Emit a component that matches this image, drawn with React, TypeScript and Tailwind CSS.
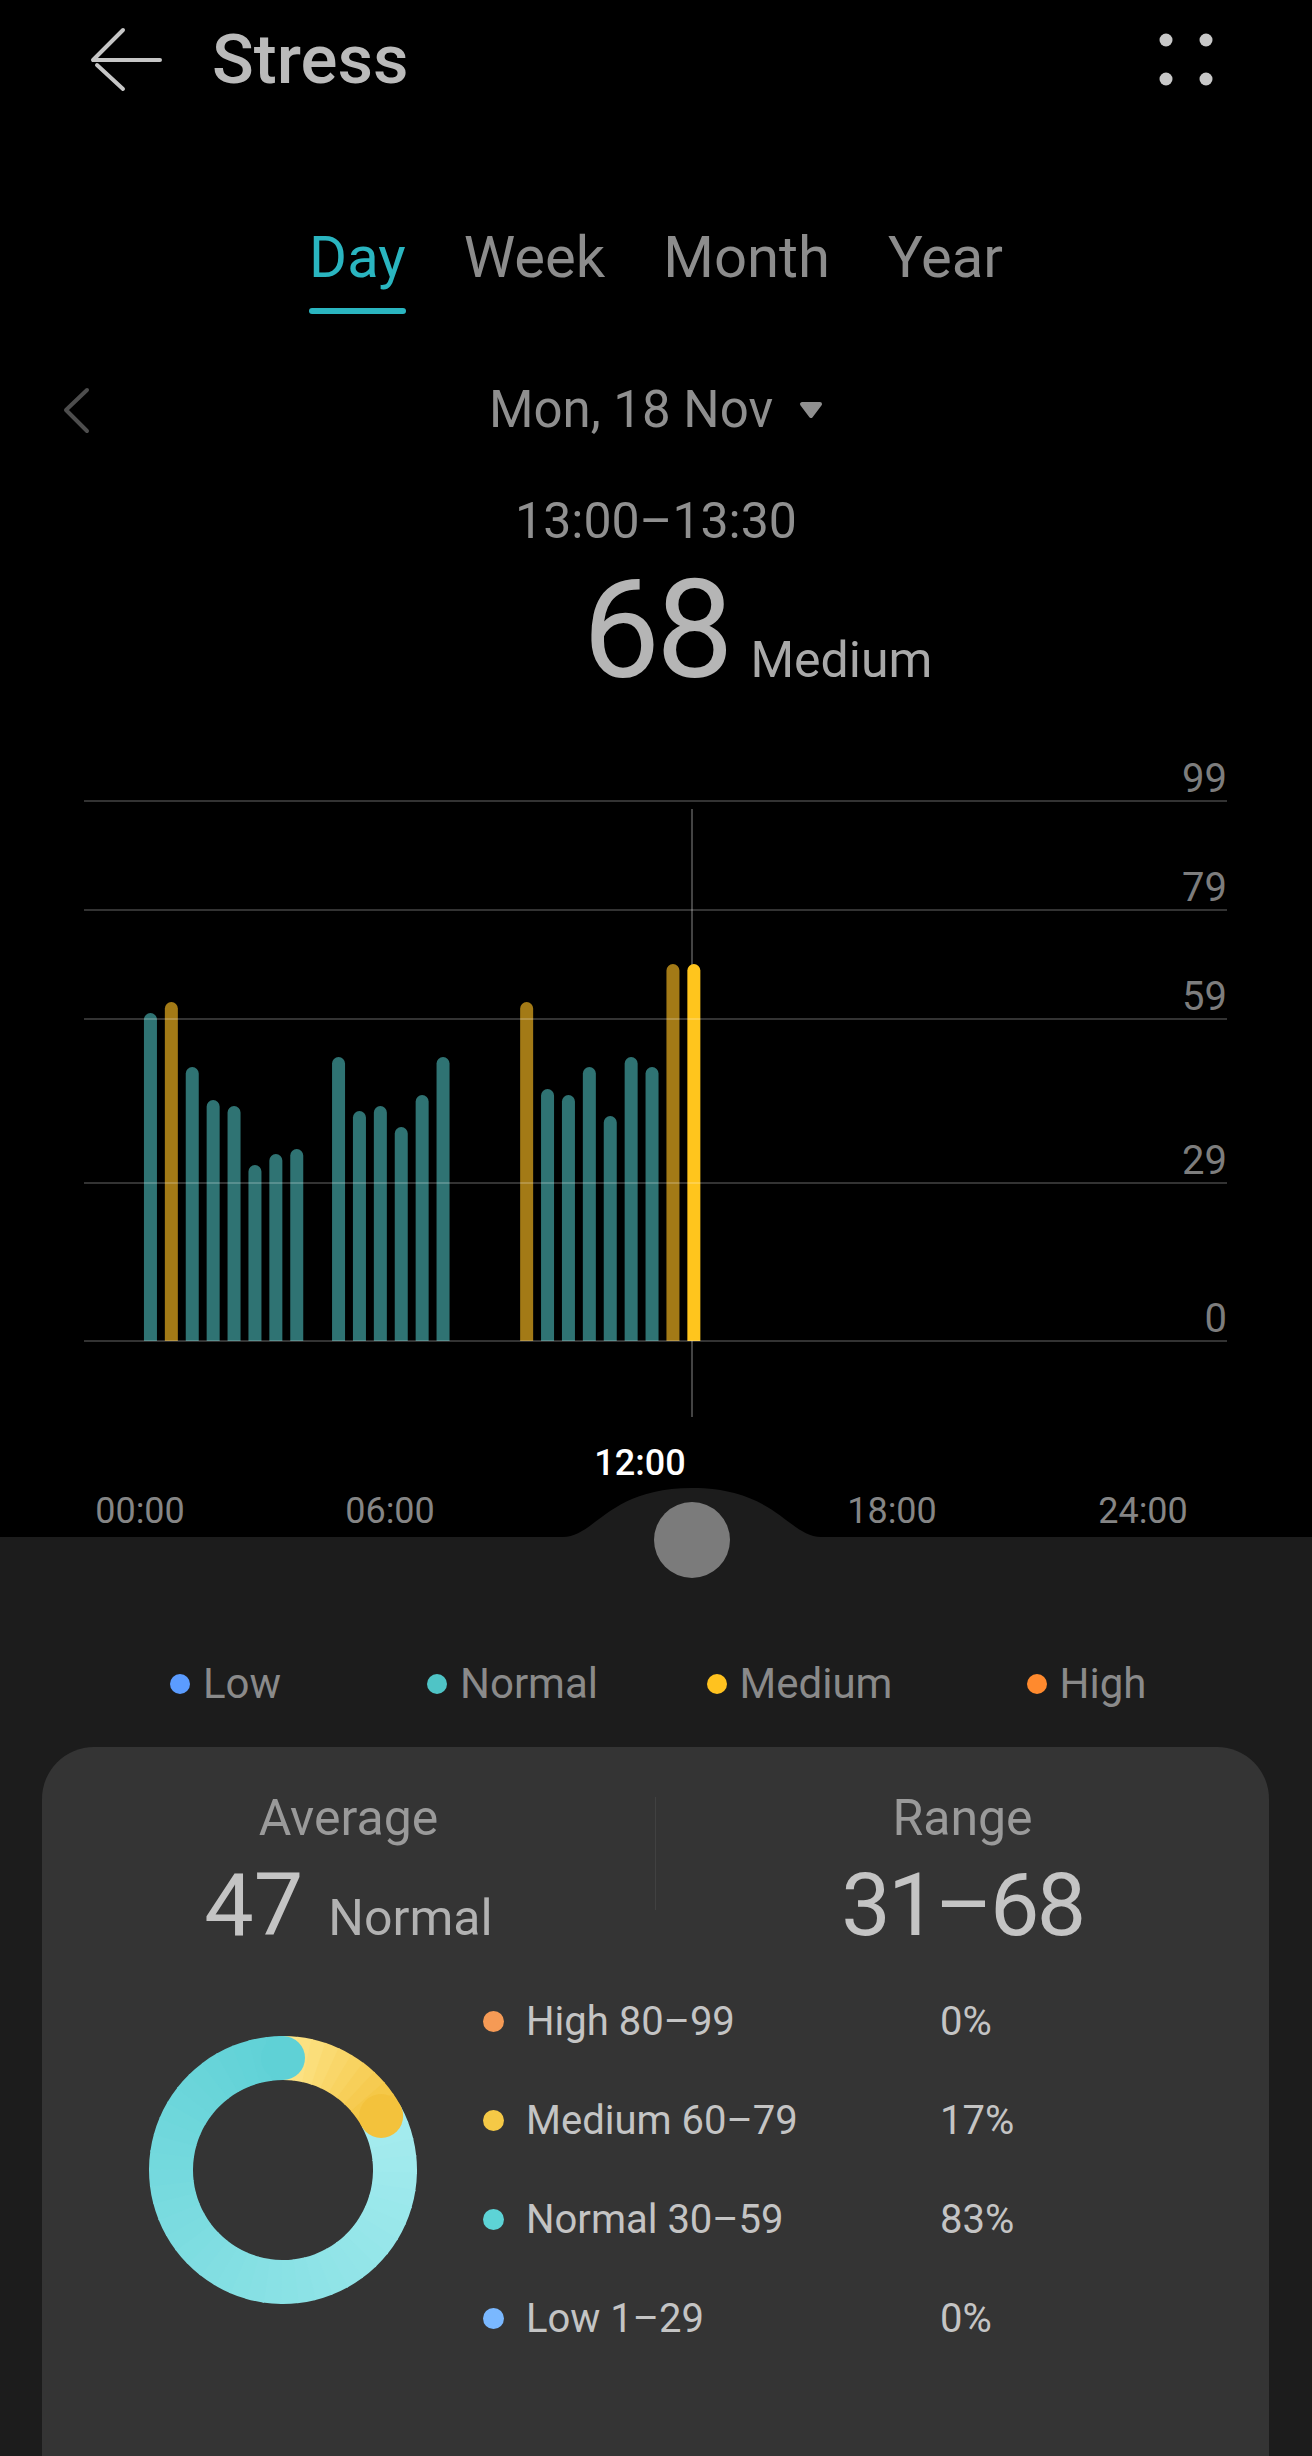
import React from "react";

type Kind = "t" | "g" | "y";
const BARS: [number, number, Kind][] = [
  [0, 1013, "t"],
  [1, 1002, "g"],
  [2, 1067, "t"],
  [3, 1100, "t"],
  [4, 1106, "t"],
  [5, 1165, "t"],
  [6, 1154, "t"],
  [7, 1149, "t"],
  [9, 1057, "t"],
  [10, 1111, "t"],
  [11, 1106, "t"],
  [12, 1127, "t"],
  [13, 1095, "t"],
  [14, 1057, "t"],
  [18, 1002, "g"],
  [19, 1089, "t"],
  [20, 1095, "t"],
  [21, 1067, "t"],
  [22, 1116, "t"],
  [23, 1057, "t"],
  [24, 1067, "t"],
  [25, 964, "g"],
  [26, 964, "y"],
];

const BAR_COLOR: Record<Kind, string> = {
  t: "#2f7373",
  g: "#a37a16",
  y: "#ffc51d",
};

const GRID: [number, string][] = [
  [801, "99"],
  [910, "79"],
  [1019, "59"],
  [1183, "29"],
  [1341, "0"],
];

function barPath(i: number, top: number) {
  const x = 140 + 20.9 * (i + 0.5);
  const r = 6.5;
  return `M${x - r} 1341 V${top + r} A${r} ${r} 0 0 1 ${x + r} ${top + r} V1341 Z`;
}

function hex(c: string): number[] {
  return [1, 3, 5].map((k) => parseInt(c.slice(k, k + 2), 16));
}
function mix(a: string, b: string, t: number) {
  const A = hex(a);
  const B = hex(b);
  const m = A.map((v, k) => Math.round(v + (B[k] - v) * t));
  return `rgb(${m[0]},${m[1]},${m[2]})`;
}

const C = 134;
const R = 112;
function polar(deg: number, r = R): [number, number] {
  const a = (deg * Math.PI) / 180;
  return [C + r * Math.sin(a), C - r * Math.cos(a)];
}
function arc(a0: number, a1: number) {
  const [x0, y0] = polar(a0);
  const [x1, y1] = polar(a1);
  const large = a1 - a0 > 180 ? 1 : 0;
  return `M${x0} ${y0} A${R} ${R} 0 ${large} 1 ${x1} ${y1}`;
}

function segments(from: number, to: number, n: number, c0: string, c1: string) {
  const out: { d: string; color: string }[] = [];
  const step = (to - from) / n;
  for (let k = 0; k < n; k++) {
    const a0 = from + step * k;
    const a1 = k === n - 1 ? to : a0 + step + 0.6;
    out.push({ d: arc(a0, a1), color: mix(c0, c1, (k + 0.5) / n) });
  }
  return out;
}

const MED_END = 61.2;
const TEAL_SEGS = segments(MED_END, 360, 40, "#a6ecef", "#5fd1d6");
const YEL_SEGS = segments(0, MED_END, 10, "#fde78e", "#f3c23c");

function Donut() {
  const [cx, cy] = polar(MED_END);
  return (
    <svg width="268" height="268" viewBox="0 0 268 268">
      {TEAL_SEGS.map((s, k) => (
        <path key={"t" + k} d={s.d} stroke={s.color} strokeWidth="44" fill="none" />
      ))}
      {YEL_SEGS.map((s, k) => (
        <path key={"y" + k} d={s.d} stroke={s.color} strokeWidth="44" fill="none" />
      ))}
      <circle cx={C} cy={C - R} r="22" fill="#5fd1d6" />
      <circle cx={cx} cy={cy} r="22" fill="#f3c23c" />
    </svg>
  );
}

function Chart() {
  return (
    <svg width="1312" height="837" viewBox="0 700 1312 837" className="block">
      <line x1="692" y1="809" x2="692" y2="1417" stroke="#5a5a5a" strokeWidth="1.5" />
      {BARS.map(([i, top, k]) => (
        <path key={i} d={barPath(i, top)} fill={BAR_COLOR[k]} />
      ))}
      {GRID.map(([y, label]) => (
        <g key={label}>
          <line x1="84" y1={y} x2="1227" y2={y} stroke="rgba(255,255,255,0.2)" strokeWidth="2" />
          <text
            x="1227"
            y={y - 9}
            textAnchor="end"
            fill="#7d7d7d"
            fontSize="40"
            fontFamily="Roboto, sans-serif"
          >
            {label}
          </text>
        </g>
      ))}
      {[
        [140, "00:00"],
        [390, "06:00"],
        [892, "18:00"],
        [1143, "24:00"],
      ].map(([x, t]) => (
        <text
          key={t as string}
          x={x as number}
          y="1523"
          textAnchor="middle"
          fill="#858585"
          fontSize="36"
          fontFamily="Roboto, sans-serif"
        >
          {t}
        </text>
      ))}
      <text
        x="640"
        y="1475"
        textAnchor="middle"
        fill="#ffffff"
        fontSize="36"
        fontWeight="500"
        fontFamily="Roboto, sans-serif"
      >
        12:00
      </text>
      <path
        d="M558 1538 L563 1537 C595 1537 608 1488 692 1488 C776 1488 789 1537 821 1537 L826 1538 Z"
        fill="#1c1c1c"
      />
    </svg>
  );
}

const LEGEND = [
  { label: "Low", color: "bg-[#5b9cff]" },
  { label: "Normal", color: "bg-[#4fc4c6]" },
  { label: "Medium", color: "bg-[#ffc21f]" },
  { label: "High", color: "bg-[#ff8a2e]" },
];

const LIST = [
  { label: "High 80–99", pct: "0%", color: "bg-[#f59a55]" },
  { label: "Medium 60–79", pct: "17%", color: "bg-[#f5c946]" },
  { label: "Normal 30–59", pct: "83%", color: "bg-[#5dd3d6]" },
  { label: "Low 1–29", pct: "0%", color: "bg-[#7ab8ff]" },
];

export default function App() {
  return (
    <div className="relative w-[1312px] h-[2456px] overflow-hidden bg-black font-[family-name:Roboto,sans-serif]">
      {/* Header */}
      <div className="flex items-center h-[120px] pl-[88px]">
        <svg width="76" height="68" viewBox="88 26 76 68">
          <path
            d="M123 30 L93 60 L160 60 M97 65 L123 89"
            stroke="#c6c6c6"
            strokeWidth="4"
            fill="none"
            strokeLinecap="round"
            strokeLinejoin="round"
          />
        </svg>
        <div className="ml-[48px] text-[69px] leading-[80px] font-medium text-[#bababa]">Stress</div>
        <svg className="ml-auto mr-[96px]" width="60" height="60" viewBox="1156 29 60 60">
          <circle cx="1166" cy="39" r="6.5" fill="#c8c8c8" />
          <circle cx="1206" cy="39" r="6.5" fill="#c8c8c8" />
          <circle cx="1166" cy="78" r="6.5" fill="#c8c8c8" />
          <circle cx="1206" cy="78" r="6.5" fill="#c8c8c8" />
        </svg>
      </div>

      {/* Tabs */}
      <div className="mt-[108px] flex justify-center items-start gap-[58px]">
        <div className="flex flex-col items-stretch">
          <span className="text-[58px] leading-[58px] text-[#2ab5c0]">Day</span>
          <span className="mt-[22px] h-[6px] rounded-full bg-[#2ab5c0]" />
        </div>
        <span className="text-[58px] leading-[58px] text-[#8c8c8c]">Week</span>
        <span className="text-[58px] leading-[58px] text-[#8c8c8c]">Month</span>
        <span className="text-[58px] leading-[58px] text-[#8c8c8c]">Year</span>
      </div>

      {/* Date row */}
      <div className="mt-[66px] h-[60px] grid grid-cols-[1fr_auto_1fr] items-center">
        <div className="pl-[60px] flex items-center">
          <svg width="32" height="48" viewBox="60 386 32 48">
            <path
              d="M87 390 L66 410 L87 431"
              stroke="#4d4d4d"
              strokeWidth="4"
              fill="none"
              strokeLinecap="round"
              strokeLinejoin="round"
            />
          </svg>
        </div>
        <div className="flex items-center">
          <span className="text-[51px] leading-[60px] text-[#8f8f8f]">Mon, 18 Nov</span>
          <svg className="ml-[26px]" width="24" height="18" viewBox="0 0 24 18">
            <polygon
              points="3,3 21,3 12,15"
              fill="#8f8f8f"
              stroke="#8f8f8f"
              strokeWidth="4"
              strokeLinejoin="round"
            />
          </svg>
        </div>
        <div />
      </div>

      {/* Time */}
      <div className="mt-[51px] text-center text-[50px] leading-[60px] text-[#8f8f8f]">13:00–13:30</div>

      {/* Value */}
      <div className="mt-[9px] h-[140px] grid grid-cols-[1fr_auto_1fr] items-baseline">
        <div />
        <span className="text-[138px] leading-[140px] tracking-[-0.03em] text-[#b5b5b5]">68</span>
        <span className="ml-[21px] text-[50px] leading-[60px] text-[#a9a9a9]">Medium</span>
      </div>

      {/* Chart */}
      <Chart />

      {/* Bottom panel */}
      <div className="h-[919px] bg-[#1c1c1c] flex flex-col">
        <div className="mt-[122px] h-[50px] px-[82px] grid grid-cols-4">
          {LEGEND.map((l) => (
            <div key={l.label} className="flex items-center justify-center gap-[13px]">
              <span className={`w-[20px] h-[20px] rounded-full ${l.color}`} />
              <span className="text-[42px] leading-[50px] text-[#8a8a8a]">{l.label}</span>
            </div>
          ))}
        </div>

        <div className="mt-[38px] ml-[42px] w-[1227px] h-[760px] rounded-t-[52px] bg-[#343434]">
          <div className="pt-[41px] grid grid-cols-[1fr_1px_1fr]">
            <div className="flex flex-col items-center">
              <span className="text-[50px] leading-[60px] text-[#9a9a9a]">Average</span>
              <div className="mt-[13px] flex items-baseline">
                <span className="text-[88px] leading-[88px] text-[#c4c4c4]">47</span>
                <span className="ml-[25px] text-[50px] leading-[60px] text-[#b2b2b2]">Normal</span>
              </div>
            </div>
            <div className="mt-[9px] h-[113px] bg-[#414141]" />
            <div className="flex flex-col items-center">
              <span className="text-[50px] leading-[60px] text-[#9a9a9a]">Range</span>
              <span className="mt-[13px] text-[88px] leading-[88px] tracking-[-0.03em] text-[#c4c4c4]">
                31–68
              </span>
            </div>
          </div>

          <div className="mt-[23px] pl-[107px] flex items-center">
            <Donut />
            <div className="ml-[66px] flex flex-col">
              {LIST.map((r) => (
                <div key={r.label} className="h-[99px] flex items-center">
                  <span className={`w-[21px] h-[21px] rounded-full ${r.color}`} />
                  <span className="ml-[22px] w-[414px] text-[40px] leading-[50px] text-[#c4c4c4]">
                    {r.label}
                  </span>
                  <span className="text-[40px] leading-[50px] text-[#c4c4c4]">{r.pct}</span>
                </div>
              ))}
            </div>
          </div>
        </div>
      </div>

      {/* Slider knob */}
      <div className="absolute left-[654px] top-[1502px] w-[76px] h-[76px] rounded-full bg-[#7b7b7b]" />
    </div>
  );
}
